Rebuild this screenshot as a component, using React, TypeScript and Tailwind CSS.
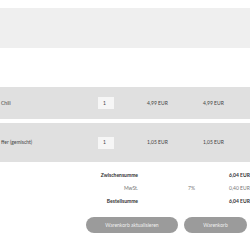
export default function App() {
  return (
    <div className="w-[250px] h-[250px] overflow-hidden bg-white text-[#444] font-['Lato','Open_Sans',sans-serif] text-[5px] leading-none">
      <div className="h-[8px]" />
      <div className="h-[40px] bg-[#efefef]" />
      <div className="h-[39px]" />

      <CartRow name="Chili" price="4,99 EUR" total="4,99 EUR" className="h-[32px]" />
      <div className="h-[4px]" />
      <CartRow name="ffer (gemischt)" price="1,05 EUR" total="1,05 EUR" className="h-[39px]" />

      <div className="mt-[11px] flex flex-col gap-[8px]">
        <TotalRow label="Zwischensumme" amount="6,04 EUR" bold />
        <TotalRow label="MwSt." rate="7%" amount="0,40 EUR" />
        <TotalRow label="Bestellsumme" amount="6,04 EUR" bold />
      </div>

      <div className="mt-[13px] flex gap-[6px] pl-[86px]">
        <button className="w-[92px] h-[16px] rounded-full bg-[#9b9b9b] text-[#f0f0f0] text-[5px]">
          Warenkorb aktualisieren
        </button>
        <button className="w-[63px] h-[16px] rounded-full bg-[#9b9b9b] text-[#f0f0f0] text-[5px]">
          Warenkorb
        </button>
      </div>
    </div>
  )
}

function CartRow({ name, price, total, className }: { name: string; price: string; total: string; className: string }) {
  return (
    <div className={`flex items-center bg-[#e0e0e0] ${className}`}>
      <div className="w-[98px] pl-[1px] whitespace-nowrap">{name}</div>
      <div className="w-[16px] h-[12px] bg-[#f6f6f6] flex items-center pl-[5px]">1</div>
      <div className="w-[33px]" />
      <div className="w-[56px] whitespace-nowrap">{price}</div>
      <div className="whitespace-nowrap">{total}</div>
    </div>
  )
}

function TotalRow({ label, rate, amount, bold }: { label: string; rate?: string; amount: string; bold?: boolean }) {
  return (
    <div className={`flex whitespace-nowrap ${bold ? 'font-bold text-[#333]' : 'text-[#777]'}`}>
      <div className="w-[138px] text-right">{label}</div>
      <div className="w-[50px]" />
      <div className="w-[41px]">{rate}</div>
      <div>{amount}</div>
    </div>
  )
}
